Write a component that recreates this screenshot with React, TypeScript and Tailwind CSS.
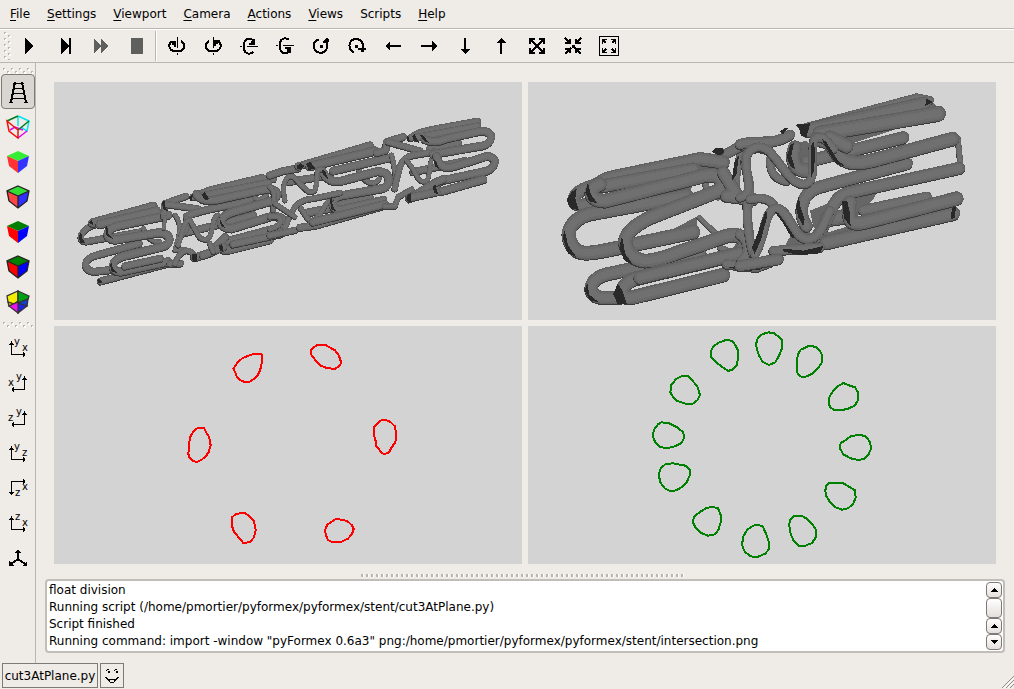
import React from 'react';
import clsx from 'clsx';

const MENUS = [
    { label: 'File', accel: true },
    { label: 'Settings', accel: true },
    { label: 'Viewport', accel: true },
    { label: 'Camera', accel: true },
    { label: 'Actions', accel: true },
    { label: 'Views', accel: true },
    { label: 'Scripts', accel: false },
    { label: 'Help', accel: true },
];

const LOG = [
    'float division',
    'Running script (/home/pmortier/pyformex/pyformex/stent/cut3AtPlane.py)',
    'Script finished',
    'Running command: import -window "pyFormex 0.6a3" png:/home/pmortier/pyformex/pyformex/stent/intersection.png',
].join('\n');

interface ToolIcon {
    label: string;
    fill?: string;
    line?: string;
    thin?: string;
    color?: string;
}

const PLAY_TOOLS: ToolIcon[] = [
    { label: 'Play', fill: 'M6 2v16l8-8z' },
    { label: 'Step', fill: 'M6 2v16l8-8zM14 2h2v16h-2z' },
    { label: 'Continue', fill: 'M3 2v16l7-8zM10 2v16l7-8z', color: '#5f5f5d' },
    { label: 'Stop', fill: 'M4 2h12v16h-12z', color: '#5f5f5d' },
];

const CAMERA_TOOLS: ToolIcon[] = [
    { label: 'Rotate left', line: 'M4 6C1 9 2 14 7 15H13C18 14 19 8 14 5', thin: 'M10.5 1V12M10.5 17v2', fill: 'M3 5h6v6h-2v-2h-2v-2h-2z' },
    { label: 'Rotate right', line: 'M16 6C19 9 18 14 13 15H7C2 14 1 8 6 5', thin: 'M10.5 1V12M10.5 17v2', fill: 'M17 4h-6v6h2v-2h2v-2h2z' },
    { label: 'Rotate up', line: 'M14 16C11 19 6 18 5 13V8C6 2 11 1 15 5', thin: 'M1 10.5h2M8 10.5h11', fill: 'M16 3v6h-6v-2h2v-2h2v-2z' },
    { label: 'Rotate down', line: 'M14 4C11 1 6 2 5 7V12C6 18 11 19 14 15', thin: 'M1 9.5h2M8 9.5h11', fill: 'M16 17v-6h-6v2h2v2h2v2z' },
    { label: 'Twist left', line: 'M8 4C3 4 2 9 3 12C5 18 12 18 15 14C17 11 16 8 15 5', fill: 'M9 9h3v3h-3zM12 7v-2l3-3h2v5zM15 3h3v3h-3z' },
    { label: 'Twist right', line: 'M7 16C2 15 2 9 3 7C5 2 12 2 15 6C16 8 17 10 16 13', fill: 'M8 9h3v3h-3zM11 12h8v2h-2v2h-3v-2h-3z' },
    { label: 'Pan left', fill: 'M2 10l5-5v4h11v2h-11v4z' },
    { label: 'Pan right', fill: 'M18 10l-5-5v4h-11v2h11v4z' },
    { label: 'Pan down', fill: 'M10 18l-5-5h4v-11h2v11h4z' },
    { label: 'Pan up', fill: 'M10 2l-5 5h4v11h2v-11h4z' },
    { label: 'Zoom out', line: 'M4 4L16 16M16 4L4 16', fill: 'M2 2h6v2h-4v4h-2zM18 2v6h-2v-4h-4v-2zM2 18v-6h2v4h4v2zM18 18h-6v-2h4v-4h2zM8 8h4v4h-4z' },
    { label: 'Zoom in', line: 'M2 2L8 8M18 2L12 8M2 18L8 12M18 18L12 12', fill: 'M8 3v5h-6v-2h4v-3zM12 3v5h6v-2h-4v-3zM8 17v-5h-6v2h4v3zM12 17v-5h6v2h-4v3zM9 9h3v3h-3z' },
    { label: 'Zoom all', line: 'M4 4L7 7M16 4L13 7M4 16L7 13M16 16L13 13', thin: 'M.5.5h19v19h-19z', fill: 'M3 3h5v1h-3v1h-1v3h-1zM17 3v5h-1v-3h-1v-1h-3v-1zM3 17v-5h1v3h1v1h3v1zM17 17h-5v-1h3v-1h1v-3h1z' },
];

const ToolButton: React.FC<{ icon: ToolIcon }> = ({ icon }) => (
    <button aria-label={icon.label} title={icon.label} className="flex h-8 w-9 items-center justify-center">
        <svg width="20" height="20" viewBox="0 0 20 20" shapeRendering="crispEdges" fill="none">
            {icon.line && <path d={icon.line} stroke="#000" strokeWidth="2" />}
            {icon.thin && <path d={icon.thin} stroke="#000" />}
            {icon.fill && <path d={icon.fill} fill={icon.color ?? '#000'} />}
        </svg>
    </button>
);

interface CubeProps {
    top: string;
    left: string;
    right: string;
    outline?: boolean;
}

const Cube: React.FC<CubeProps> = ({ top, left, right, outline }) => (
    <svg width="24" height="24" viewBox="0 0 24 24">
        <path d="M12 1L23 6L12 11L1 6z" fill={top} />
        <path d="M1 6L12 11V23L3 16z" fill={left} />
        <path d="M23 6L12 11V23L21 16z" fill={right} />
        {outline && (
            <path d="M12 1L23 6L21 16L12 23L3 16L1 6zM1 6L12 11L23 6M12 11V23" fill="none" stroke="#222" strokeWidth="1.3" />
        )}
    </svg>
);

const RENDER_MODES = [
    {
        label: 'Perspective',
        icon: (
            <svg width="20" height="22" viewBox="0 0 20 22" fill="none" stroke="#000" shapeRendering="crispEdges">
                <path d="M7 1L3 21M14 1L18 21" strokeWidth="2" />
                <path d="M5 2.5h11M6 7.5h9M5 12.5h11M4 17.5h13M1 21.5h4M16 21.5h4" />
            </svg>
        ),
    },
    {
        label: 'Wireframe',
        icon: (
            <svg width="24" height="24" viewBox="0 0 24 24" fill="none" strokeWidth="1.5">
                <path d="M12 2V11" stroke="#00e5e5" />
                <path d="M12 1L23 6L21 16L15 12" stroke="#00e5ee" />
                <path d="M4 15L9 12L17 15M21 16L12 23" stroke="#e800e8" />
                <path d="M1 6L12 1M12 15L23 6" stroke="#007a1e" />
                <path d="M1 6L12 15V23L3 16z" stroke="#f01010" />
            </svg>
        ),
    },
    { label: 'Flat', icon: <Cube top="#33ee33" left="#ff3333" right="#3333ff" /> },
    { label: 'Flat wire', icon: <Cube top="#33dd33" left="#ff4444" right="#2f2fff" outline /> },
    { label: 'Smooth', icon: <Cube top="#007f00" left="#ff0000" right="#0000ff" /> },
    { label: 'Smooth wire', icon: <Cube top="#007f00" left="#ff0000" right="#0000ff" outline /> },
    {
        label: 'Transparent',
        icon: (
            <svg width="24" height="24" viewBox="0 0 24 24" stroke="#333" strokeWidth="1.3">
                <path d="M12 1V11L8 14L2 12L1 6z" fill="#f5ee00" />
                <path d="M12 1L23 6L22 9L12 13z" fill="#00a010" />
                <path d="M2 12L8 14L3 16z" fill="#e0c000" />
                <path d="M12 13L22 9L21 16L16 15z" fill="#1040d0" />
                <path d="M12 13L21 16L12 23z" fill="#2020e8" />
                <path d="M3 16L12 12V23z" fill="#f010f0" />
            </svg>
        ),
    },
];

interface AxisIcon {
    label: string;
    path: string;
    texts: { t: string; x: number; y: number }[];
}

const UP_RIGHT = 'M3.5 2V15.5H16M1 5h5M2 4h3M15 13v5M16 14v3';
const UP_LEFT = 'M16.5 2V15.5H4M14 5h5M15 4h3M5 13v5M4 14v3';

const AXES: AxisIcon[] = [
    { label: 'Front', path: UP_RIGHT, texts: [{ t: 'y', x: 6, y: 6 }, { t: 'x', x: 14, y: 12 }] },
    { label: 'Back', path: UP_LEFT, texts: [{ t: 'y', x: 8, y: 6 }, { t: 'x', x: 0, y: 12 }] },
    { label: 'Left', path: UP_LEFT, texts: [{ t: 'y', x: 8, y: 6 }, { t: 'z', x: 0, y: 12 }] },
    { label: 'Right', path: UP_RIGHT, texts: [{ t: 'y', x: 6, y: 6 }, { t: 'z', x: 14, y: 12 }] },
    { label: 'Top', path: 'M3.5 16V2.5H17M1 13h5M2 14h3M15 0v5M16 1v3', texts: [{ t: 'z', x: 7, y: 17 }, { t: 'x', x: 14, y: 11 }] },
    { label: 'Bottom', path: UP_RIGHT, texts: [{ t: 'z', x: 7, y: 6 }, { t: 'x', x: 14, y: 12 }] },
];

// A tube is [path, width]; later tubes lie in front of earlier ones
type TubeSpec = [string, number];

const Tubes: React.FC<{ items: TubeSpec[]; x: number; y: number }> = ({ items, x, y }) => (
    <g transform={`translate(${x} ${y}) scale(0.33333)`} fill="none" strokeLinecap="round" strokeLinejoin="round">
        {items.map(([d, w], i) => (
            <g key={i}>
                <path d={d} stroke="#3a3a3a" strokeWidth={w * 1.1} transform="translate(-1 3)" />
                <path d={d} stroke="#606060" strokeWidth={w * 1.1} />
                <path d={d} stroke="#6a6a6a" strokeWidth={w * 0.9} />
                <path d={d} stroke="#707070" strokeWidth={w * 0.55} />
            </g>
        ))}
    </g>
);

const STENT_LEFT: TubeSpec[] = [
    ['M110 372C60 385 50 425 80 424L245 394', 18],
    ['M250 385C260 410 280 430 300 425', 13],
    ['M238 430L110 465C65 475 70 515 105 514L160 508', 20],
    ['M122 543L330 488', 20],
    ['M365 400L480 372L580 345', 20],
    ['M575 285C590 305 610 295 620 285', 12],
    ['M640 310V340', 12],
    ['M98 368L280 318', 24],
    ['M120 372L290 332', 24],
    ['M325 345L170 378C135 390 135 415 165 419L290 398C330 392 345 430 305 440L190 468C150 480 150 518 185 514L325 484', 23],
    ['M195 498L300 475', 20],
    ['M312 350L314 310L378 288', 18],
    ['M318 312L415 326', 18],
    ['M345 345C375 380 350 420 345 450M345 450L375 448', 13],
    ['M315 350L312 385', 11],
    ['M380 348C440 320 520 320 570 298', 20],
    ['M380 355C385 385 375 395 370 400', 16],
    ['M355 435C375 370 375 360 390 360C415 400 415 418 435 418C465 420 450 350 475 345', 14],
    ['M400 290L450 270L600 234L640 236', 20],
    ['M435 285L625 248', 20],
    ['M410 282C430 310 470 300 500 292L610 268C660 262 660 290 635 302L520 335C470 350 475 385 515 385L635 348C680 345 680 380 640 387L500 424C475 440 485 455 510 448L630 418', 23],
    ['M520 432L660 402', 20],
    ['M330 490L362 490', 18],
    ['M345 490C365 440 390 445 405 468', 16],
    ['M404 472L450 458L495 412', 22],
    ['M430 465L490 440', 22],
    ['M460 455L450 430', 14],
];

const STENT_LEFT_DARK = [
    'M386 292l14-10l-6 24zM424 284l10-8l14 22l-12 2zM396 462l14 0l0 22l-12 2zM476 438l10-8l4 24l-10 0zM112 540l8-4l8 14h-14zM306 306l8-4l2 20l10 12l-16-6z',
    'M56 408l8-12l2 20l12 14l-18-2zM136 384l6-8l2 24l14 16l-18-8zM150 494l6-8l2 20l14 14l-18-6zM86 368l10-8l4 16zM478 350l6 16l14 22l-16-12z',
];

const STENT_RIGHT: TubeSpec[] = [
    ['M55 245L160 228', 20],
    ['M265 205C280 250 315 260 328 235', 14],
    ['M170 320L300 292', 20],
    ['M110 338L190 322', 22],
    ['M430 215L585 182', 20],
    ['M480 145L565 128', 20],
    ['M0 225L40 212L85 204', 20],
    ['M85 198L300 135', 20],
    ['M120 198L315 152', 24],
    ['M0 260C25 280 5 310 10 330', 14],
    ['M190 212L360 172', 22],
    ['M155 210C175 245 190 245 215 242L320 214C365 210 365 255 340 264L220 285C180 290 180 332 215 328L340 300', 23],
    ['M45 300C30 240 60 210 80 240C110 270 120 285 135 270C150 230 130 205 155 208', 14],
    ['M90 320C110 350 115 365 130 360C160 345 160 310 185 295', 14],
    ['M45 385C70 310 90 298 130 295L210 278', 16],
    ['M15 310L75 350', 14],
    ['M0 350C45 340 40 380 0 386', 16],
    ['M0 406L75 390', 18],
    ['M90 382L140 375L345 316', 20],
    ['M130 365L345 312', 22],
    ['M320 158L348 150L350 125L400 110', 20],
    ['M355 125L450 152', 18],
    ['M365 165C375 200 375 220 380 250', 14],
    ['M375 265C390 180 400 172 430 165L490 155', 18],
    ['M410 182C440 210 440 248 465 244C485 240 475 180 490 168', 13],
    ['M345 318H375L385 290L425 268', 16],
    ['M425 112C440 98 470 92 500 86L622 64', 20],
    ['M440 112L622 78', 20],
    ['M465 118C490 128 510 125 530 115L635 92C680 95 665 130 640 136L490 162', 22],
    ['M500 168C510 205 530 205 555 198L650 168C690 170 675 205 650 212L520 240C480 255 490 278 520 272L640 238', 22],
    ['M418 295L500 245L520 237', 22],
    ['M422 292L500 275', 22],
];

const STENT_RIGHT_DARK = [
    'M80 198l12-8l12 8l-8 8h-14zM108 192l14-6l14 20l-20 4zM412 284l12-6l0 28l-12-2zM488 262l8-8l8 28l-10-2zM426 108l8-6l12 26l-12-6zM448 104l10 0l18 24l-12-4zM410 108l8 4l0 14l-8-4z',
    'M180 300l6-10l2 28l12 18l-16-8zM154 206l12 10l10 24l-16-14zM492 178l8 10l8 20l-14-10z',
];

// Solid areas where tubes merge, drawn behind them
const CLOSE_LEFT_MASS = [
    'M400 325L458 304L440 350L400 362z',
    'M390 440L470 398L474 465L420 470z',
    'M540 250L590 300L610 345L530 350z',
    'M560 520L600 460L640 530L610 550z',
    'M180 290L480 206L560 220L560 245L180 330z',
    'M470 500L470 524L420 540z',
];

const CLOSE_RIGHT_MASS = [
    'M180 130L560 34L612 90L330 180L320 215L280 190L240 150z',
    'M310 340L420 305L400 345L360 385L340 420L312 380z',
    'M210 380L260 360L250 440L220 430z',
    'M230 455L330 425L650 372L640 400L250 490z',
    'M160 440L250 450L240 495L130 495z',
    'M160 180L200 170L240 230L180 265z',
    'M0 430L30 480L60 530L0 550z',
];

const CLOSE_LEFT: TubeSpec[] = [
    ['M220 280L130 315C90 335 95 366 130 362L200 350', 34],
    ['M440 335L170 385C100 395 70 440 95 480C110 515 150 508 200 498L460 443', 38],
    ['M478 400L530 450', 14],
    ['M495 295L508 335', 18],
    ['M540 490L590 510', 16],
    ['M480 510L200 570C140 585 140 640 190 640H240', 36],
    ['M600 210C595 250 585 290 590 315', 20],
    ['M560 208L610 182L690 170', 28],
    ['M170 310C175 290 200 282 220 278L480 224L550 234', 36],
    ['M190 305L460 255', 36],
    ['M180 300C140 315 150 350 195 350L470 280C530 260 570 285 535 320L330 400C270 430 240 460 265 500C290 540 330 532 370 520L560 455C620 440 630 490 590 510L300 580C240 590 230 645 275 640L550 572', 38],
    ['M550 265L590 330L560 335L640 345', 34],
    ['M300 580L590 510L620 505', 36],
    ['M620 345C650 310 600 240 620 210C640 180 690 190 700 220', 24],
    ['M630 350C610 400 640 460 630 520', 24],
    ['M560 540L650 550L690 535', 26],
];

const CLOSE_RIGHT: TubeSpec[] = [
    ['M90 225C90 270 110 285 140 292', 22],
    ['M200 232L490 160', 34],
    ['M165 190C150 230 170 260 200 258', 38],
    ['M560 338L370 378', 28],
    ['M260 405L330 395', 40],
    ['M0 180C40 165 90 190 150 152', 28],
    ['M195 130L530 40L570 48', 22],
    ['M205 138L550 60', 40],
    ['M240 148L595 88', 42],
    ['M654 165L661 235', 16],
    ['M500 238L240 308C180 325 175 390 200 425', 34],
    ['M230 165C290 170 280 210 310 225C340 242 370 235 400 228L638 164', 38],
    ['M270 160L320 185', 38],
    ['M658 252L340 322C290 330 280 360 265 400L230 460', 34],
    ['M640 388L260 475', 38],
    ['M330 355C320 420 340 420 370 415L650 343', 38],
    ['M0 340C50 330 10 260 20 215C40 175 80 185 100 215C140 260 150 295 190 300C240 300 205 200 225 165C240 150 260 165 280 195', 24],
    ['M0 450C30 470 30 510 5 530', 28],
    ['M22 360C20 420 30 480 40 510', 24],
    ['M30 345C80 335 95 350 110 375', 24],
    ['M45 510C80 450 70 380 110 372C150 380 160 460 200 465C240 465 250 420 270 380', 26],
    ['M100 500L240 490', 26],
    ['M0 545L115 525', 30],
];

// Darkest patches, where the surface turns away from the light
const CLOSE_LEFT_DARK = [
    'M80 350l14-26l16-10l-4 30l10 34l-22-4zM515 204l12-12h22l4 14l-16 8zM136 326l8-30l8 34l20 28l-24-6zM68 460l6-22l10 46l26 36l-26-12zM238 490l8-34l10 54l26 36l-30-18zM134 620l8-24l6 36l30 24l-30-8zM219 630l14-30l14 18l14 42h-28z',
    'M590 185l24-16l18 2l-20 18l-8 14zM575 290l8-56l14-20l-8 60zM606 360l8 10l10 80l6 40l-16-50z',
    'M565 550l60-2l50-6l-10 14l-50 6z',
];
const CLOSE_RIGHT_DARK = [
    'M165 122l46-4l-6 22l-6 20l-16-6l-6-20zM120 142l14-10h10l-16 20zM140 220l10-36l12-8l-8 40l12 40l-14-8z',
    'M168 370l8-34l6 36l12 34l-4 20l-16-28zM306 350l16 2l8 36l2 40l-20-26zM36 490l20-50l22-64l4 20l-20 74l-18 40zM246 165l12 8l34 54l22 20l-26-8l-32-50zM102 380l14 8l30 44l20 30l-12-2l-26-44z',
    'M556 66l2-22l20 10zM636 372l12-4l-4 34l-12 4zM130 494l60 6l60-14l-10 22l-60 6l-50-12z',
    'M212 190l8-20l6 30l-4 60l-8 20l-2-40z',
];

const RED_RINGS = [
    'M190 116L202 98L218 84L240 75L255 71H272L277 76L276 96L270 122L262 138L250 148L238 156H224L210 150L200 140L196 128z',
    'M422 60L430 52L443 45H467L482 54L494 60L506 76L514 98L508 108L494 117L470 114L452 107L440 96L430 82L422 72z',
    'M55 372L57 346L60 322L70 304L84 293H101L108 306L117 320L122 346L116 366L108 378L94 390L80 396L68 392L58 382z',
    'M612 292L624 278L636 269L658 273L675 289L679 314L676 336L664 354L657 367L642 373L634 367L619 348L616 328L611 315z',
    'M186 562L196 553L210 550H226L238 558L252 574L257 600L252 622L240 636L220 639L206 622L192 606L186 588z',
    'M465 600L472 584L484 576L498 567L512 569L532 573L546 586L551 597L546 612L534 626L512 636H486L474 630L468 616z',
];

const GREEN_RINGS = [
    'M212 80L220 64L234 54L258 45L275 47L286 60L294 76L295 98L290 120L276 134L264 138L244 124L226 110L212 95z',
    'M348 58L354 38L368 27L386 22L402 25L414 34L427 47V68L418 90L406 112L386 120L368 110L358 94L352 76z',
    'M471 106L474 88L482 74L496 68L508 62L528 66L540 78L547 92L546 112L534 130L518 146L492 157L480 154L471 142z',
    'M567 218L578 200L590 186L610 174L630 182L645 187L655 204V224L644 242L622 252L600 256H584L572 248L567 238z',
    'M91 202L94 180L108 162L128 152L144 154L158 168L172 184L180 210L172 226L156 238L136 236L112 228L98 214z',
    'M38 334L42 314L54 298L64 292L88 295L110 306L130 322L132 340L124 354L104 364L82 370L60 366L46 352z',
    'M56 450L62 430L76 418L98 415L120 419L136 422L150 435V450L140 472L126 486L108 496L92 499L74 490L62 474z',
    'M600 370L602 354L616 346L632 334L658 329L676 334L688 348L694 368L686 388L672 402L654 405L632 400L610 388z',
    'M556 498L558 482L568 474H608L622 482L645 496L647 518L640 536L624 550L606 554L584 546L568 528L558 512z',
    'M158 590L162 576L178 562L198 550L216 545L234 550L242 570V592L236 612L226 628L204 632L184 624L166 606z',
    'M447 598L452 582L464 572L486 573L502 582L514 594L528 614V636L516 654L494 663H478L460 646L452 626z',
    'M306 660L310 634L322 614L340 602L352 599L368 604L378 626L387 652V672L376 686L352 696L332 694L314 680z',
];

const View: React.FC<{ box: string; label: string; children: React.ReactNode }> = ({ box, label, children }) => (
    <div className="min-h-0 min-w-0 overflow-hidden bg-[#d3d3d3]">
        <svg viewBox={box} role="img" aria-label={label} className="block h-full w-full" shapeRendering="crispEdges">
            {children}
        </svg>
    </div>
);

const Patches: React.FC<{ paths: string[]; x: number; y: number; color: string }> = ({ paths, x, y, color }) => (
    <g transform={`translate(${x} ${y}) scale(0.33333)`} fill={color}>
        {paths.map(d => <path key={d} d={d} />)}
    </g>
);

const Rings: React.FC<{ rings: string[]; color: string; x: number; y: number }> = ({ rings, color, x, y }) => (
    <g transform={`translate(${x} ${y}) scale(0.33333)`} fill="none" stroke={color} strokeWidth="6">
        {rings.map(d => <path key={d} d={d} />)}
    </g>
);

const Grip: React.FC<{ id: string; className: string }> = ({ id, className }) => (
    <svg className={className} aria-hidden="true" shapeRendering="crispEdges">
        <defs>
            <pattern id={id} width="8" height="6" patternUnits="userSpaceOnUse">
                <path d="M1 1h2v2h-2zM5 4h2v2h-2z" fill="#fff" />
                <path d="M0 0h2v1h-1v1h-1zM4 3h2v1h-1v1h-1z" fill="#b9b5b1" />
            </pattern>
        </defs>
        <rect width="100%" height="100%" fill={`url(#${id})`} />
    </svg>
);

const ScrollArrow: React.FC<{ label: string; down?: boolean }> = ({ label, down }) => (
    <button
        aria-label={label}
        className="flex h-4 w-full items-center justify-center rounded-sm border border-[#7d7a77] bg-linear-to-b from-white to-[#e4e0dc]"
    >
        <svg width="7" height="4" viewBox="0 0 7 4" shapeRendering="crispEdges">
            <path d={down ? 'M0 0h7L3.5 4z' : 'M0 4h7L3.5 0z'} />
        </svg>
    </button>
);

export default function App() {
    const [mode, setMode] = React.useState('Perspective');

    return (
        <div className="flex h-screen flex-col overflow-hidden bg-[#efebe7] font-['DejaVu_Sans',sans-serif] text-xs text-black">
            <nav className="flex h-[29px] shrink-0 items-center gap-px border-b border-[#b9b5b1] pl-0.5">
                {MENUS.map(({ label, accel }) => (
                    <button key={label} className="px-2 leading-4">
                        {accel ? <><span className="underline underline-offset-2">{label[0]}</span>{label.slice(1)}</> : label}
                    </button>
                ))}
            </nav>

            <div className="flex h-[34px] shrink-0 items-center border-t border-b border-t-white border-b-[#b9b5b1] pl-1">
                <Grip id="grip-tools" className="h-7 w-[7px]" />
                {PLAY_TOOLS.map(icon => <ToolButton key={icon.label} icon={icon} />)}
                <div className="mr-0.5 h-[30px] w-0.5 border-l border-[#b9b5b1] bg-white" />
                {CAMERA_TOOLS.map(icon => <ToolButton key={icon.label} icon={icon} />)}
            </div>

            <div className="flex min-h-0 flex-1">
                <aside className="flex w-9 shrink-0 flex-col items-center border-r border-[#b9b5b1] pt-[5px]">
                    <Grip id="grip-modes" className="h-1.5 w-[30px] shrink-0" />
                    {RENDER_MODES.map(({ label, icon }) => (
                        <button
                            key={label}
                            aria-label={label}
                            aria-pressed={mode === label}
                            onClick={() => setMode(label)}
                            className={clsx(
                                'flex h-[35px] w-[34px] shrink-0 items-center justify-center rounded-sm border',
                                mode === label ? 'border-[#7d7a77] bg-[#d9d5d1]' : 'border-transparent',
                            )}
                        >
                            {icon}
                        </button>
                    ))}
                    <Grip id="grip-views" className="my-[3px] h-1.5 w-[30px] shrink-0" />
                    {AXES.map(({ label, path, texts }) => (
                        <button key={label} aria-label={`${label} view`} className="flex h-[35px] w-[34px] shrink-0 items-center justify-center">
                            <svg width="26" height="28" viewBox="-3 -4 26 28">
                                <path d={path} fill="none" stroke="#000" shapeRendering="crispEdges" />
                                {texts.map(({ t, x, y }) => (
                                    <text key={t} x={x} y={y} fontSize="10">{t}</text>
                                ))}
                            </svg>
                        </button>
                    ))}
                    <button aria-label="Isometric view" className="flex h-[35px] w-[34px] shrink-0 items-center justify-center">
                        <svg width="20" height="20" viewBox="0 0 20 20" shapeRendering="crispEdges">
                            <path d="M10 2V10L3 15M10 10L17 15" fill="none" stroke="#000" strokeWidth="2" />
                            <path d="M10 0l3 4h-6zM1 17v-5l5 5zM19 17v-5l-5 5z" />
                        </svg>
                    </button>
                </aside>

                <main className="flex min-w-0 flex-1 flex-col pt-[19px]">
                    <div className="grid min-h-0 flex-1 grid-cols-2 grid-rows-2 gap-1.5 px-[18px]">
                        <View box="54 82 468 238" label="Stent model">
                            <Tubes items={STENT_LEFT} x={60} y={100} />
                            <Patches paths={STENT_LEFT_DARK} x={60} y={100} color="#292929" />
                            <Tubes items={STENT_RIGHT} x={270} y={100} />
                            <Patches paths={STENT_RIGHT_DARK} x={270} y={100} color="#292929" />
                        </View>
                        <View box="528 82 468 238" label="Stent model, close view">
                            <Patches paths={CLOSE_LEFT_MASS} x={540} y={84} color="#666" />
                            <Patches paths={CLOSE_RIGHT_MASS} x={740} y={84} color="#666" />
                            <Tubes items={CLOSE_LEFT} x={540} y={84} />
                            <Patches paths={CLOSE_LEFT_DARK} x={540} y={84} color="#292929" />
                            <Tubes items={CLOSE_RIGHT} x={740} y={84} />
                            <Patches paths={CLOSE_RIGHT_DARK} x={740} y={84} color="#292929" />
                        </View>
                        <View box="54 326 468 238" label="First cross section">
                            <Rings rings={RED_RINGS} color="#ff0000" x={170} y={330} />
                        </View>
                        <View box="528 326 468 238" label="Second cross section">
                            <Rings rings={GREEN_RINGS} color="#008000" x={640} y={325} />
                        </View>
                    </div>

                    <div className="flex h-[15px] shrink-0 items-end justify-center pr-1 pb-0.5">
                        <div className="h-[3px] w-1/3 bg-[repeating-linear-gradient(90deg,#b9b5b1_0_2px,#fff_2px_3px,transparent_3px_5px)]" />
                    </div>

                    <div className="mr-[9px] mb-2.5 ml-[9px] flex shrink-0 rounded-sm border-2 border-[#c1bdb9] bg-white p-px">
                        <textarea
                            readOnly
                            rows={4}
                            wrap="off"
                            aria-label="Messages"
                            value={LOG}
                            className="block h-[68px] min-w-0 flex-1 resize-none overflow-hidden pl-px leading-[17px] outline-none"
                        />
                        <div className="flex w-4 flex-col">
                            <ScrollArrow label="Scroll up" />
                            <div className="flex-1 rounded-sm border border-[#7d7a77] bg-linear-to-b from-white to-[#e4e0dc]" />
                            <ScrollArrow label="Page up" />
                            <ScrollArrow label="Scroll down" down />
                        </div>
                    </div>
                </main>
            </div>

            <footer className="flex h-[26px] shrink-0 gap-0.5 pb-px pl-0.5">
                <button className="h-[25px] w-24 border border-[#7d7a77] whitespace-nowrap">cut3AtPlane.py</button>
                <button aria-label="Smiley" className="flex h-[25px] w-6 items-center justify-center border border-[#7d7a77]">
                    <svg width="14" height="16" viewBox="0 0 14 16" fill="none" stroke="#000" shapeRendering="crispEdges">
                        <path d="M1 2.5h1M2 1.5h2M9 2.5h1M10 1.5h2M0 9.5h2M12 9.5h2M1 10.5h2M11 10.5h2M2 11.5h10M3 12.5h2M9 12.5h2M4 13.5h1M9 13.5h1M5 14.5h4" />
                        <path d="M3 3h2v2h-2zM11 3h2v2h-2z" fill="#000" stroke="none" />
                    </svg>
                </button>
                <svg className="ml-auto self-end" width="12" height="12" viewBox="0 0 12 12" aria-hidden="true">
                    <path d="M0 12L12 0M4 12L12 4M8 12L12 8" stroke="#8f8b88" />
                    <path d="M2 12L12 2M6 12L12 6" stroke="#fff" />
                </svg>
            </footer>
        </div>
    );
}
